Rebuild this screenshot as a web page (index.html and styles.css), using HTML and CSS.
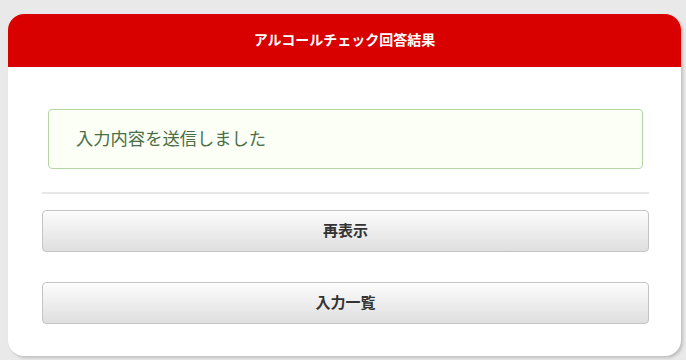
FILE: index.html
```html
<!DOCTYPE html>
<html lang="ja">
<head>
    <meta charset="UTF-8">
    <meta name="viewport" content="width=device-width, initial-scale=1.0">
    <title>アルコールチェック回答結果</title>
    <link rel="stylesheet" href="styles.css">
</head>
<body>
    <div class="card">
        <div class="card__header">アルコールチェック回答結果</div>
        <div class="card__body">
            <div class="notice">入力内容を送信しました</div>
            <hr class="divider">
            <button class="button" type="button">再表示</button>
            <button class="button" type="button">入力一覧</button>
        </div>
    </div>
</body>
</html>
```

FILE: styles.css
```css
/* Reset */
* {
    margin: 0;
    padding: 0;
    box-sizing: border-box;
}
body {
    font-family: "Noto Sans CJK JP", "Noto Sans", sans-serif;
    background-color: #e9e9e9;
    padding: 14px 5px 0 8px;
    height: 100vh;
    overflow: hidden;
}
.card {
    background-color: #fff;
    border-radius: 16px;
    box-shadow: 2px 2px 3px rgba(0, 0, 0, 0.18);
    overflow: hidden;
}
.card__header {
    background-color: #d90000;
    color: #fff;
    font-size: 14px;
    font-weight: bold;
    height: 53px;
    padding-bottom: 4px;
    display: flex;
    align-items: center;
    justify-content: center;
}
.card__body {
    display: flex;
    flex-direction: column;
    padding: 42px 32px 32px 34px;
}
.notice {
    margin: 0 6px 0 6px;
    height: 60px;
    display: flex;
    align-items: center;
    padding: 0 0 4px 27px;
    font-size: 17.3px;
    color: #4a6e46;
    background-color: #fbfff6;
    border: 1px solid #b4d6a6;
    border-radius: 4px;
}
.divider {
    border: none;
    height: 2px;
    background-color: #e8e8e8;
    margin: 23px 0 16px;
}
.button {
    font-family: inherit;
    height: 42px;
    padding-bottom: 4px;
    font-size: 15px;
    font-weight: bold;
    color: #333;
    border: 1px solid #c4c4c4;
    border-radius: 4px;
    background: linear-gradient(to bottom, #fcfcfc, #dfdfdf);
    cursor: pointer;
}
.button + .button {
    margin-top: 30px;
}
```
